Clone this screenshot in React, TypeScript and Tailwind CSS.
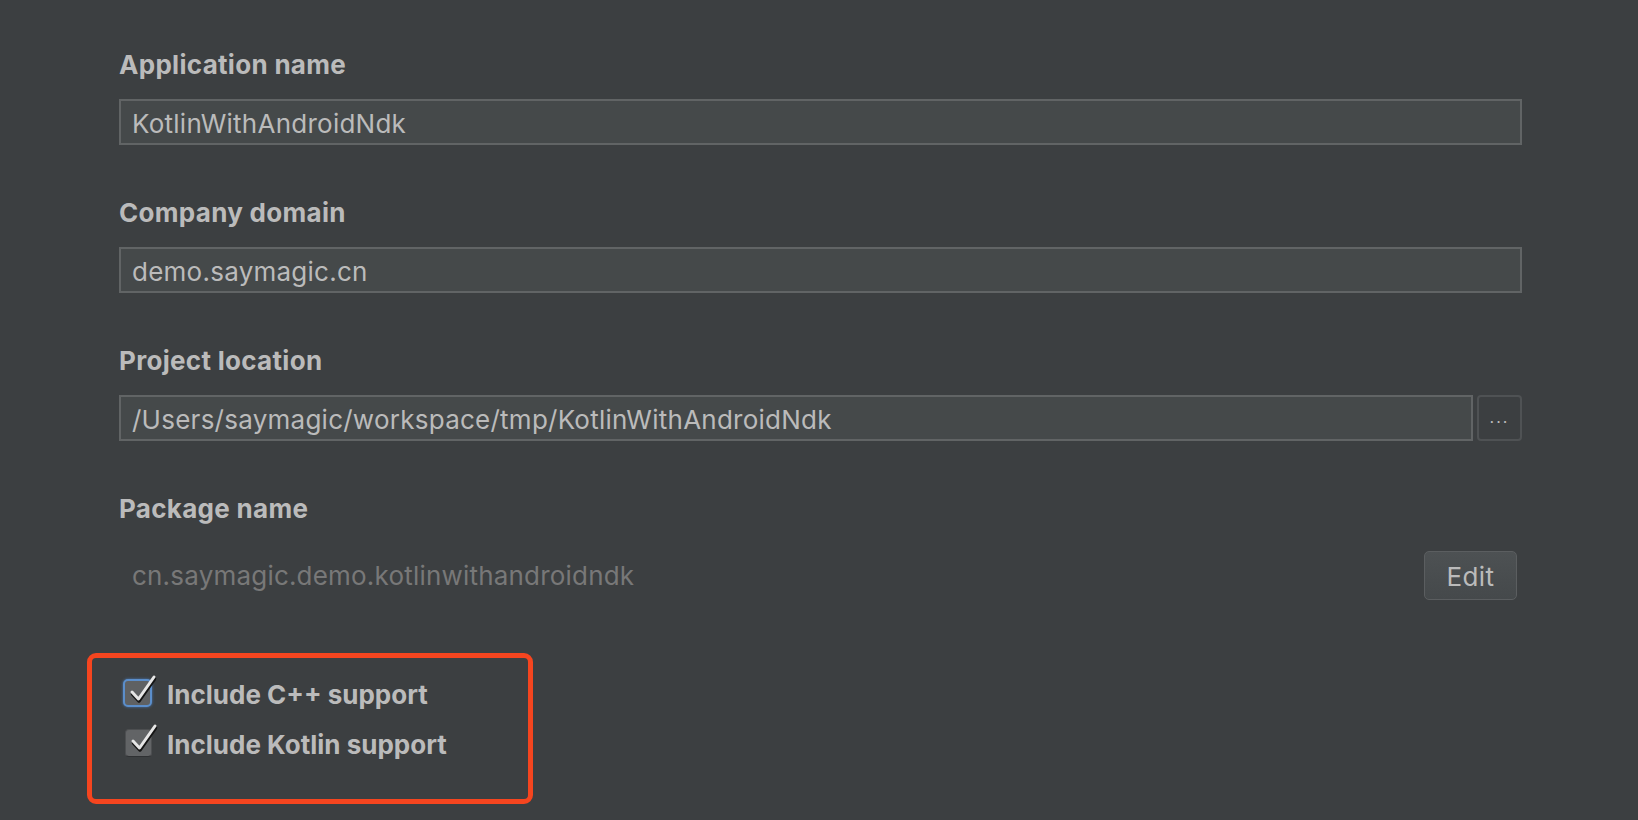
import React from 'react'

const font = { fontFamily: 'Inter, "Noto Sans", sans-serif' }

function Field({ label, children }: { label: string; children: React.ReactNode }) {
  return (
    <div className="flex flex-col">
      <div className="text-[26px] leading-[30px] font-bold tracking-[0.3px] text-[#bbbbbb]">{label}</div>
      <div className="mt-[19px]">{children}</div>
    </div>
  )
}

function TextBox({ value }: { value: string }) {
  return (
    <div className="flex h-[46px] flex-1 items-center border-2 border-[#616465] bg-[#45494a] pl-[11px] pt-[2px] text-[26px] tracking-[0.25px] text-[#bbbbbb]">
      {value}
    </div>
  )
}

function CheckMark() {
  return (
    <svg className="absolute -top-[7px] left-[3px]" width="30" height="32" viewBox="0 0 30 32" fill="none">
      <path d="M4 18 L10.5 25 L26 3" stroke="#151515" strokeWidth="3.5" strokeLinecap="round" strokeLinejoin="round" transform="translate(0.5 2)" />
      <path d="M4 18 L10.5 25 L26 3" stroke="#e6e6e6" strokeWidth="3" strokeLinecap="round" strokeLinejoin="round" />
    </svg>
  )
}

function Check({ label, focused }: { label: string; focused?: boolean }) {
  return (
    <div className="flex h-[50px] items-center">
      <div
        className={
          focused
            ? 'relative h-[28px] w-[29px] rounded-[5px] border-2 border-[#5b8ecb] bg-[#5f6163] shadow-[0_0_3px_#4a78b0]'
            : 'relative ml-[2px] h-[28px] w-[27px] rounded-[4px] border border-[#4d4f51] border-b-[#2f3133] bg-[#626466]'
        }
      >
        <CheckMark />
      </div>
      <span className="ml-[15px] mt-[3px] text-[26px] font-bold text-[#bbbbbb]">{label}</span>
    </div>
  )
}

export default function App() {
  return (
    <div className="h-[820px] w-[1638px] overflow-hidden bg-[#3c3f41]" style={font}>
      <div className="flex flex-col gap-[53px] pl-[119px] pr-[116px] pt-[50px]">
        <Field label="Application name">
          <div className="flex">
            <TextBox value="KotlinWithAndroidNdk" />
          </div>
        </Field>
        <Field label="Company domain">
          <div className="flex">
            <TextBox value="demo.saymagic.cn" />
          </div>
        </Field>
        <Field label="Project location">
          <div className="flex gap-[4px]">
            <TextBox value="/Users/saymagic/workspace/tmp/KotlinWithAndroidNdk" />
            <button className="flex h-[46px] w-[45px] items-center justify-center rounded-[4px] border-2 border-[#4f5254] bg-[#3c3f41] pb-[2px] text-[16px] leading-none tracking-[2px] text-[#bbbbbb]">
              ...
            </button>
          </div>
        </Field>
        <div className="flex flex-col">
          <div className="text-[26px] leading-[30px] font-bold tracking-[0.3px] text-[#bbbbbb]">Package name</div>
          <div className="mt-[27px] flex items-center justify-between pl-[13px] pr-[5px]">
            <span className="text-[26px] tracking-[0.2px] text-[#787878]">cn.saymagic.demo.kotlinwithandroidndk</span>
            <button className="h-[49px] w-[93px] rounded-[5px] border border-[#5b5e60] bg-gradient-to-b from-[#4d5153] to-[#45494b] pt-[2px] text-[26px] tracking-[0.4px] text-[#bbbbbb]">
              Edit
            </button>
          </div>
        </div>
      </div>
      <div className="ml-[87px] mt-[53px] h-[151px] w-[446px] rounded-[9px] border-[5px] border-[#f5451f] pl-[31px] pt-[10px]">
        <Check label="Include C++ support" focused />
        <Check label="Include Kotlin support" />
      </div>
    </div>
  )
}
